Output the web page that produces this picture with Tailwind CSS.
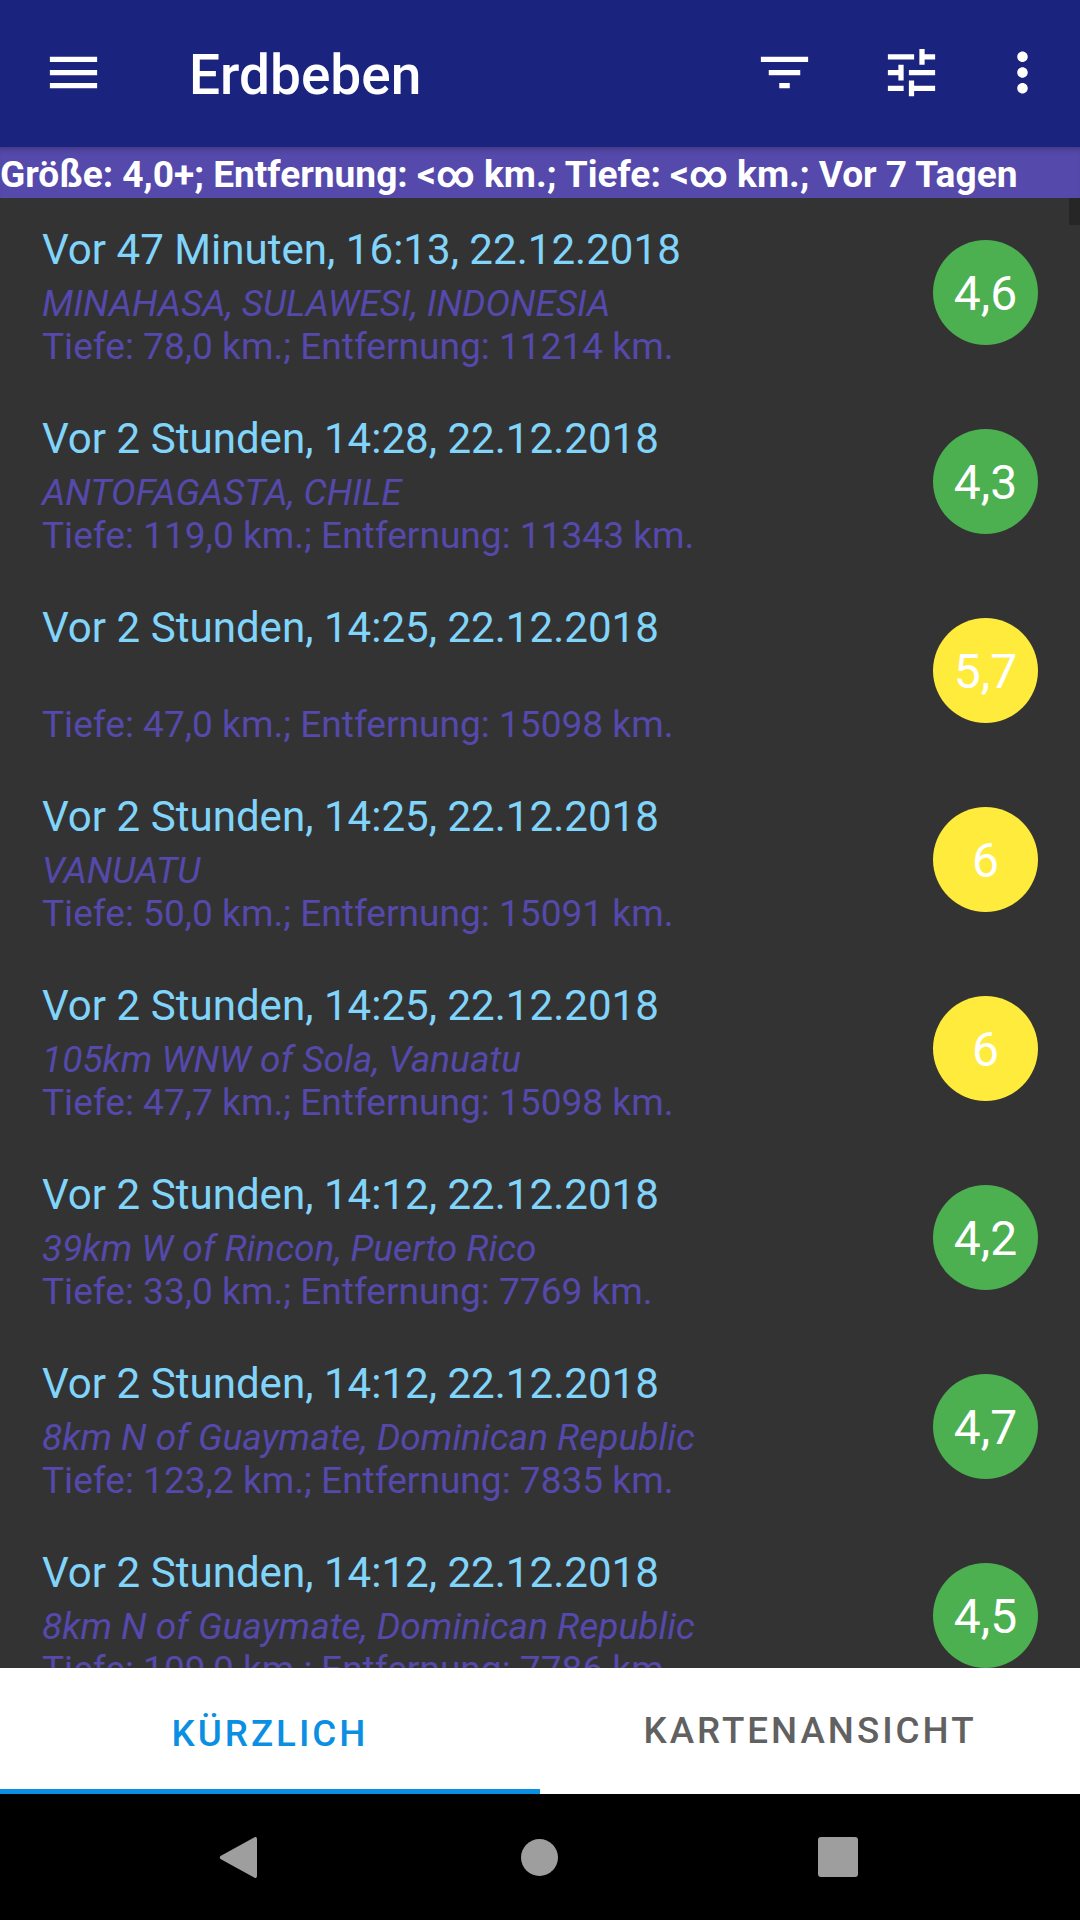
<!DOCTYPE html>
<html lang="de">
<head>
  <meta charset="UTF-8" />
  <meta name="viewport" content="width=device-width, initial-scale=1.0"/>
  <title>Erdbeben</title>
  <script src="https://cdn.jsdelivr.net/npm/@tailwindcss/browser@4"></script>
</head>
<body class="bg-black font-['Roboto',sans-serif] w-[1080px] h-[1920px] overflow-hidden flex flex-col">

  <!-- Toolbar -->
  <header class="bg-[#1a237e] h-[147px] flex items-center relative shrink-0">
    <svg class="ml-[42px] w-[63px] h-[63px] -mt-[2px]" viewBox="0 0 24 24" fill="#fff"><path d="M3 18h18v-2H3v2zm0-5h18v-2H3v2zm0-7v2h18V6H3z"/></svg>
    <h1 class="ml-[84px] text-[55px] leading-[62px] font-medium text-white mt-[2px]">Erdbeben</h1>
    <div class="ml-auto flex items-center -mt-[2px]">
      <svg class="w-[63px] h-[63px]" viewBox="0 0 24 24" fill="#fff"><path d="M10 18h4v-2h-4v2zM3 6v2h18V6H3zm3 7h12v-2H6v2z"/></svg>
      <svg class="ml-[64px] w-[63px] h-[63px]" viewBox="0 0 24 24" fill="#fff"><path d="M3 17v2h6v-2H3zM3 5v2h10V5H3zm10 16v-2h8v-2h-8v-2h-2v6h2zM7 9v2H3v2h4v2h2V9H7zm14 4v-2H11v2h10zm-6-4h2V7h4V5h-4V3h-2v6z"/></svg>
      <svg class="ml-[48px] mr-[26px] w-[63px] h-[63px]" viewBox="0 0 24 24" fill="#fff"><path d="M12 8c1.1 0 2-.9 2-2s-.9-2-2-2-2 .9-2 2 .9 2 2 2zm0 2c-1.100 0-2 .9-2 2s.9 2 2 2 2-.9 2-2-.9-2-2-2zm0 6c-1.100 0-2 .9-2 2s.9 2 2 2 2-.9 2-2-.9-2-2-2z"/></svg>
    </div>
  </header>

  <!-- Active filter -->
  <div class="bg-[#5549ab] h-[51px] shrink-0 flex items-center shadow-[inset_0_6px_6px_-4px_rgba(0,0,0,0.25)]">
    <p class="text-[37.1px] leading-[43px] font-bold text-white whitespace-nowrap mt-[4px]">Größe: 4,0+; Entfernung: &lt;∞ km.; Tiefe: &lt;∞ km.; Vor 7 Tagen</p>
  </div>

  <!-- Quake list -->
  <main class="bg-[#333333] h-[1470px] shrink-0 overflow-hidden relative">
    <div class="absolute top-0 right-0 w-[11px] h-[27px] bg-[#262626]"></div>

    <div class="h-[189px] pl-[42px] pr-[42px] pt-[27px] flex items-start justify-between">
      <div>
        <p class="text-[42.1px] leading-[49px] text-[#81d4fa]">Vor 47 Minuten, 16:13, 22.12.2018</p>
        <p class="mt-[8px] h-[43px] text-[36.85px] leading-[43px] italic text-[#5549ab]">MINAHASA, SULAWESI, INDONESIA</p>
        <p class="text-[37.1px] leading-[43px] text-[#5549ab]">Tiefe: 78,0 km.; Entfernung: 11214 km.</p>
      </div>
      <div class="mt-[15px] pt-[2px] w-[105px] h-[105px] rounded-full bg-[#4caf50] text-white text-[48px] flex items-center justify-center shrink-0">4,6</div>
    </div>

    <div class="h-[189px] pl-[42px] pr-[42px] pt-[27px] flex items-start justify-between">
      <div>
        <p class="text-[42.1px] leading-[49px] text-[#81d4fa]">Vor 2 Stunden, 14:28, 22.12.2018</p>
        <p class="mt-[8px] h-[43px] text-[36.85px] leading-[43px] italic text-[#5549ab]">ANTOFAGASTA, CHILE</p>
        <p class="text-[37.1px] leading-[43px] text-[#5549ab]">Tiefe: 119,0 km.; Entfernung: 11343 km.</p>
      </div>
      <div class="mt-[15px] pt-[2px] w-[105px] h-[105px] rounded-full bg-[#4caf50] text-white text-[48px] flex items-center justify-center shrink-0">4,3</div>
    </div>

    <div class="h-[189px] pl-[42px] pr-[42px] pt-[27px] flex items-start justify-between">
      <div>
        <p class="text-[42.1px] leading-[49px] text-[#81d4fa]">Vor 2 Stunden, 14:25, 22.12.2018</p>
        <p class="mt-[8px] h-[43px] text-[36.85px] leading-[43px] italic text-[#5549ab]"></p>
        <p class="text-[37.1px] leading-[43px] text-[#5549ab]">Tiefe: 47,0 km.; Entfernung: 15098 km.</p>
      </div>
      <div class="mt-[15px] pt-[2px] w-[105px] h-[105px] rounded-full bg-[#ffeb3b] text-white text-[48px] flex items-center justify-center shrink-0">5,7</div>
    </div>

    <div class="h-[189px] pl-[42px] pr-[42px] pt-[27px] flex items-start justify-between">
      <div>
        <p class="text-[42.1px] leading-[49px] text-[#81d4fa]">Vor 2 Stunden, 14:25, 22.12.2018</p>
        <p class="mt-[8px] h-[43px] text-[36.85px] leading-[43px] italic text-[#5549ab]">VANUATU</p>
        <p class="text-[37.1px] leading-[43px] text-[#5549ab]">Tiefe: 50,0 km.; Entfernung: 15091 km.</p>
      </div>
      <div class="mt-[15px] pt-[2px] w-[105px] h-[105px] rounded-full bg-[#ffeb3b] text-white text-[48px] flex items-center justify-center shrink-0">6</div>
    </div>

    <div class="h-[189px] pl-[42px] pr-[42px] pt-[27px] flex items-start justify-between">
      <div>
        <p class="text-[42.1px] leading-[49px] text-[#81d4fa]">Vor 2 Stunden, 14:25, 22.12.2018</p>
        <p class="mt-[8px] h-[43px] text-[37.1px] leading-[43px] italic text-[#5549ab]">105km WNW of Sola, Vanuatu</p>
        <p class="text-[37.1px] leading-[43px] text-[#5549ab]">Tiefe: 47,7 km.; Entfernung: 15098 km.</p>
      </div>
      <div class="mt-[15px] pt-[2px] w-[105px] h-[105px] rounded-full bg-[#ffeb3b] text-white text-[48px] flex items-center justify-center shrink-0">6</div>
    </div>

    <div class="h-[189px] pl-[42px] pr-[42px] pt-[27px] flex items-start justify-between">
      <div>
        <p class="text-[42.1px] leading-[49px] text-[#81d4fa]">Vor 2 Stunden, 14:12, 22.12.2018</p>
        <p class="mt-[8px] h-[43px] text-[37.1px] leading-[43px] italic text-[#5549ab]">39km W of Rincon, Puerto Rico</p>
        <p class="text-[37.1px] leading-[43px] text-[#5549ab]">Tiefe: 33,0 km.; Entfernung: 7769 km.</p>
      </div>
      <div class="mt-[15px] pt-[2px] w-[105px] h-[105px] rounded-full bg-[#4caf50] text-white text-[48px] flex items-center justify-center shrink-0">4,2</div>
    </div>

    <div class="h-[189px] pl-[42px] pr-[42px] pt-[27px] flex items-start justify-between">
      <div>
        <p class="text-[42.1px] leading-[49px] text-[#81d4fa]">Vor 2 Stunden, 14:12, 22.12.2018</p>
        <p class="mt-[8px] h-[43px] text-[37.1px] leading-[43px] italic text-[#5549ab]">8km N of Guaymate, Dominican Republic</p>
        <p class="text-[37.1px] leading-[43px] text-[#5549ab]">Tiefe: 123,2 km.; Entfernung: 7835 km.</p>
      </div>
      <div class="mt-[15px] pt-[2px] w-[105px] h-[105px] rounded-full bg-[#4caf50] text-white text-[48px] flex items-center justify-center shrink-0">4,7</div>
    </div>

    <div class="h-[189px] pl-[42px] pr-[42px] pt-[27px] flex items-start justify-between">
      <div>
        <p class="text-[42.1px] leading-[49px] text-[#81d4fa]">Vor 2 Stunden, 14:12, 22.12.2018</p>
        <p class="mt-[8px] h-[43px] text-[37.1px] leading-[43px] italic text-[#5549ab]">8km N of Guaymate, Dominican Republic</p>
        <p class="text-[37.1px] leading-[43px] text-[#5549ab]">Tiefe: 109,0 km.; Entfernung: 7786 km.</p>
      </div>
      <div class="mt-[15px] pt-[2px] w-[105px] h-[105px] rounded-full bg-[#4caf50] text-white text-[48px] flex items-center justify-center shrink-0">4,5</div>
    </div>
  </main>

  <!-- Tabs -->
  <nav class="bg-white h-[126px] shrink-0 grid grid-cols-2">
    <div class="flex items-center justify-center pt-[10px] border-b-[5px] border-[#0b8fe3] text-[#0b8fe3] text-[36.75px] font-medium tracking-[3px]">KÜRZLICH</div>
    <div class="flex items-center justify-center pt-[5px] pb-[5px] text-[#616161] text-[36.75px] font-medium tracking-[3px]">KARTENANSICHT</div>
  </nav>

  <!-- System nav bar -->
  <div class="bg-black h-[126px] shrink-0 flex items-center pl-[219px]">
    <svg class="w-[38px] h-[43px]" viewBox="0 0 38 43" fill="#9e9e9e"><path d="M36 1 L1.5 20 Q0 21.5 1.500 23 L36 42 Q38 42.500 38 40 L38 3 Q38 .5 36 1z"/></svg>
    <div class="ml-[264px] w-[37px] h-[37px] rounded-full bg-[#9e9e9e]"></div>
    <div class="ml-[260px] w-[40px] h-[40px] rounded-[3px] bg-[#9e9e9e]"></div>
  </div>
</body>
</html>
